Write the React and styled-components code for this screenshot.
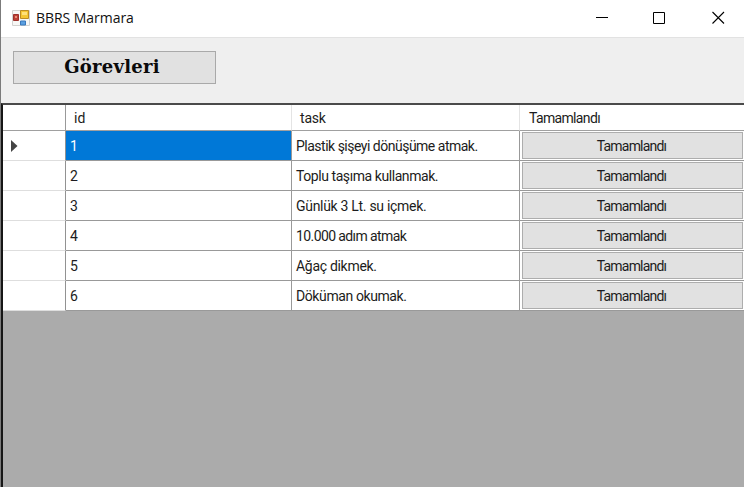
import React from "react";
import styled, { createGlobalStyle } from "styled-components";

const GlobalStyle = createGlobalStyle`
  * { box-sizing: border-box; }
  html, body { margin: 0; padding: 0; overflow: hidden; }
`;

const Window = styled.div`
  width: 744px;
  height: 487px;
  display: flex;
  flex-direction: column;
  background: #efefef;
  border-left: 1px solid #7b7b7b;
  color: #1c1c20;
  font: 14px/20px Roboto, "Liberation Sans", sans-serif;
  overflow: hidden;
`;

const TitleBar = styled.header`
  flex: none;
  height: 38px;
  display: flex;
  align-items: center;
  padding: 0 19px 2px 11px;
  background: #fff;
  border-bottom: 1px solid #e2e2e2;
`;

const Title = styled.h1`
  flex: 1;
  margin: 0 0 0 6px;
  font: 400 14px/20px "Open Sans", "Noto Sans", sans-serif;
  color: #111;
`;

const TitleText = styled.span`
  letter-spacing: ${(p) => p.$spacing}px;
`;

const Controls = styled.div`
  display: grid;
  grid-template-columns: 57px 59px 13px;
`;

const ControlButton = styled.button`
  width: 13px;
  height: 13px;
  padding: 0;
  border: 0;
  background: none;
  display: flex;
`;

const Toolbar = styled.div`
  flex: none;
  height: 65px;
  padding: 13px 12px 0;
`;

const TasksButton = styled.button`
  display: block;
  width: 203px;
  height: 33px;
  padding: 0 5px 1px 0;
  border: 1px solid #a9a9a9;
  background: #e1e1e1;
  color: #0a0a0a;
  font: 700 18px/30px "DejaVu Serif", "Liberation Serif", serif;
  letter-spacing: 0.25px;
`;

const Grid = styled.main`
  flex: 1;
  border-top: 2px solid #4a4a4a;
  border-left: 2px solid #161616;
  background: #ababab;
`;

const Row = styled.div`
  display: grid;
  grid-template-columns: 63px 226px 228px 1fr;
  height: ${(p) => (p.$header ? 26 : 30)}px;
  background: #fff;
`;

const HeaderCell = styled.div`
  border-right: 1px solid ${(p) => (p.$strong ? "#999" : "#e4e4e4")};
  border-bottom: 1px solid #a0a0a0;
  padding: 3px 0 0 ${(p) => p.$inset}px;
  letter-spacing: ${(p) => p.$spacing || 0}px;
  &:last-child { border-right: 0; }
`;

const RowHeader = styled.div`
  border-right: 1px solid #929292;
  border-bottom: 1px solid #dedede;
  padding: 9px 0 0 8px;
`;

const Cell = styled.div`
  border-right: 1px solid #999;
  border-bottom: 1px solid #999;
  padding: 5px 0 0 ${(p) => p.$inset || 4}px;
  white-space: nowrap;
  letter-spacing: ${(p) => p.$spacing || 0}px;
  background: ${(p) => (p.$selected ? "#0078d7" : "#fff")};
  color: ${(p) => (p.$selected ? "#fff" : "inherit")};
`;

const ButtonCell = styled.div`
  border-bottom: 1px solid #999;
  padding: 1px 1px 1px 2px;
`;

const DoneButton = styled.button`
  display: block;
  width: 100%;
  height: 27px;
  padding: 1px 2px 0 0;
  border: 1px solid #adadad;
  background: #e1e1e1;
  color: inherit;
  font: inherit;
  letter-spacing: -0.8px;
`;

const Icon = styled.svg`
  display: block;
  flex: none;
`;

const tasks = [
  { id: 1, task: "Plastik şişeyi dönüşüme atmak.", spacing: -0.5 },
  { id: 2, task: "Toplu taşıma kullanmak.", spacing: -0.43 },
  { id: 3, task: "Günlük 3 Lt. su içmek.", spacing: -0.3 },
  { id: 4, task: "10.000 adım atmak", spacing: -0.6 },
  { id: 5, task: "Ağaç dikmek.", spacing: -0.3 },
  { id: 6, task: "Döküman okumak.", spacing: -0.4 },
];

function FormIcon() {
  return (
    <Icon width="18" height="18" viewBox="0 0 18 18">
      <path d="M.5 1.5h17v15H.5z" fill="#f7f7f5" stroke="#d2d2d0" />
      <path d="M8.5 1.5h8v8h-8z" fill="#f5c633" stroke="#bd8c25" />
      <path d="M10 3h5v3h-5z" fill="#ffe07a" />
      <path d="M1.5 5.5h5v6h-5z" fill="#bd4035" stroke="#9d302b" />
      <path d="M3 7h2v2H3z" fill="#e98c78" />
      <path d="M8.5 12h5v4h-5z" fill="#5a9fe0" stroke="#3978bc" />
    </Icon>
  );
}

export default function App() {
  return (
    <>
      <GlobalStyle />
      <Window>
        <TitleBar>
          <FormIcon />
          <Title><TitleText $spacing={-0.05}>BBRS Marmara</TitleText></Title>
          <Controls>
            <ControlButton aria-label="Minimize">
              <Icon width="13" height="13"><path d="M0 6.5h12" stroke="#000" /></Icon>
            </ControlButton>
            <ControlButton aria-label="Maximize">
              <Icon width="13" height="13"><path d="M.5 1.5h11v11H.5z" fill="none" stroke="#000" /></Icon>
            </ControlButton>
            <ControlButton aria-label="Close">
              <Icon width="13" height="13"><path d="M.5 1L12 12.5M12 1L.5 12.5" stroke="#000" strokeWidth="1.1" /></Icon>
            </ControlButton>
          </Controls>
        </TitleBar>
        <Toolbar>
          <TasksButton>Görevleri</TasksButton>
        </Toolbar>
        <Grid>
          <Row $header>
            <HeaderCell $strong />
            <HeaderCell $inset={8}>id</HeaderCell>
            <HeaderCell $inset={8} $spacing={-0.2}>task</HeaderCell>
            <HeaderCell $inset={9} $spacing={-0.65}>Tamamlandı</HeaderCell>
          </Row>
          {tasks.map(({ id, task, spacing }) => (
            <Row key={id}>
              <RowHeader>
                {id === 1 && (
                  <Icon width="7" height="12"><path d="M0 0l6.5 6L0 12z" fill="#444" /></Icon>
                )}
              </RowHeader>
              <Cell $inset={4} $selected={id === 1}>{id}</Cell>
              <Cell $spacing={spacing}>{task}</Cell>
              <ButtonCell><DoneButton>Tamamlandı</DoneButton></ButtonCell>
            </Row>
          ))}
        </Grid>
      </Window>
    </>
  );
}
